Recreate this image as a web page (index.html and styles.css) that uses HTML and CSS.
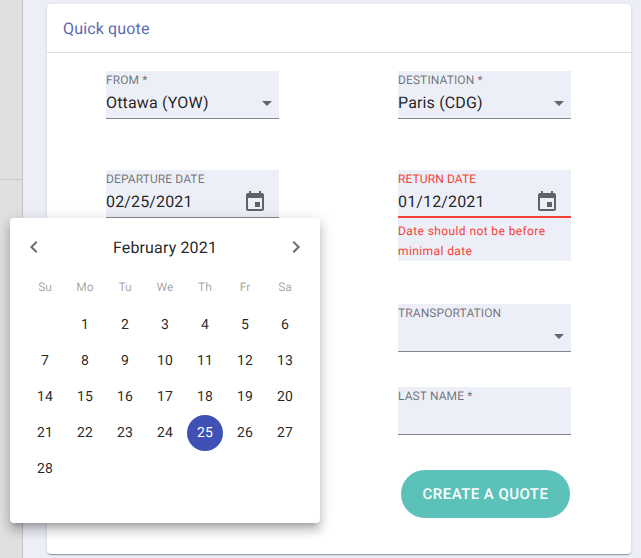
FILE: index.html
```html
<!DOCTYPE html>
<html lang="en">
<head>
<meta charset="utf-8">
<title>Quick quote</title>
<link rel="stylesheet" href="styles.css">
</head>
<body>
<div class="app">
  <aside class="sidebar"><div class="side-top"></div></aside>
  <main class="main">
    <section class="card">
      <h1 class="card-title">Quick quote</h1>
      <form class="form">
        <div class="column">
          <div class="field row1">
            <span class="label">FROM *</span>
            <div class="value"><span>Ottawa (YOW)</span><i class="caret"></i></div>
          </div>
          <div class="field row2">
            <span class="label">DEPARTURE DATE</span>
            <div class="value"><span>02/25/2021</span>
              <svg class="cal" viewBox="0 0 24 24"><path d="M17 12h-5v5h5v-5zM16 1v2H8V1H6v2H5c-1.11 0-1.99.9-1.99 2L3 19c0 1.1.89 2 2 2h14c1.1 0 2-.9 2-2V5c0-1.1-.9-2-2-2h-1V1h-2zm3 18H5V8h14v11z"/></svg>
            </div>
          </div>
        </div>
        <div class="column">
          <div class="field row1">
            <span class="label">DESTINATION *</span>
            <div class="value"><span>Paris (CDG)</span><i class="caret"></i></div>
          </div>
          <div class="field row2 error">
            <span class="label">RETURN DATE</span>
            <div class="value"><span>01/12/2021</span>
              <svg class="cal" viewBox="0 0 24 24"><path d="M17 12h-5v5h5v-5zM16 1v2H8V1H6v2H5c-1.11 0-1.99.9-1.99 2L3 19c0 1.1.89 2 2 2h14c1.1 0 2-.9 2-2V5c0-1.1-.9-2-2-2h-1V1h-2zm3 18H5V8h14v11z"/></svg>
            </div>
            <p class="helper">Date should not be before minimal date</p>
          </div>
          <div class="field row3">
            <span class="label">TRANSPORTATION</span>
            <div class="value"><span></span><i class="caret"></i></div>
          </div>
          <div class="field row4">
            <span class="label">LAST NAME *</span>
            <div class="value"></div>
          </div>
          <button class="submit" type="button">CREATE A QUOTE</button>
        </div>
      </form>
    </section>
  </main>
  <div class="picker">
    <div class="picker-head">
      <svg class="chev" viewBox="0 0 24 24"><path d="M15.41 7.41 14 6l-6 6 6 6 1.41-1.41L10.83 12z"/></svg>
      <span class="month">February 2021</span>
      <svg class="chev" viewBox="0 0 24 24"><path d="M10 6 8.59 7.41 13.17 12l-4.58 4.59L10 18l6-6z"/></svg>
    </div>
    <div class="weekdays">
      <span>Su</span><span>Mo</span><span>Tu</span><span>We</span><span>Th</span><span>Fr</span><span>Sa</span>
    </div>
    <div class="days">
      <span></span><span>1</span><span>2</span><span>3</span><span>4</span><span>5</span><span>6</span>
      <span>7</span><span>8</span><span>9</span><span>10</span><span>11</span><span>12</span><span>13</span>
      <span>14</span><span>15</span><span>16</span><span>17</span><span>18</span><span>19</span><span>20</span>
      <span>21</span><span>22</span><span>23</span><span>24</span><span class="selected">25</span><span>26</span><span>27</span>
      <span>28</span>
    </div>
  </div>
</div>
</body>
</html>
```
FILE: styles.css
```css
* { box-sizing: border-box; }
html, body { margin: 0; height: 100%; }
body {
  font-family: Roboto, "Liberation Sans", sans-serif;
  color: rgba(0, 0, 0, 0.87);
  overflow: hidden;
  text-rendering: geometricPrecision;
}
.app { display: flex; width: 641px; height: 558px; position: relative; background: #eceff8; }
.sidebar {
  width: 23px;
  flex: none;
  background: #e0e0e0;
  border-right: 1px solid #c4c4c4;
}
.side-top { height: 180px; border-bottom: 1px solid #c8c8c8; }
.main { flex: 1; padding: 4px 10px 4px 24px; }
.card {
  height: 550px;
  background: #fff;
  border-radius: 4px;
  box-shadow: 0 2px 1px -1px rgba(0,0,0,.2), 0 1px 1px 0 rgba(0,0,0,.14), 0 1px 3px 0 rgba(0,0,0,.12);
}
.card-title {
  margin: 0;
  height: 49px;
  padding: 15px 16px 0;
  font-size: 16px;
  line-height: 20px;
  font-weight: 400;
  letter-spacing: .15px;
  color: #5c6bb0;
  border-bottom: 1px solid #e0e0e0;
}
.form { display: flex; padding: 18px 60px 0 59px; justify-content: space-between; }
.column { width: 173px; display: flex; flex-direction: column; }
.field { background: #edeff8; display: flex; flex-direction: column; }
.label {
  height: 19px;
  padding-top: 2px;
  font-size: 12px;
  line-height: 14px;
  letter-spacing: .1px;
  color: rgba(0, 0, 0, 0.54);
}
.value {
  height: 29px;
  flex: none;
  display: flex;
  align-items: center;
  justify-content: space-between;
  padding: 0 0 3px 0;
  font-size: 16px;
  letter-spacing: .15px;
  border-bottom: 1px solid #86868c;
}
.row2 { margin-top: 51px; }
.row3 { margin-top: 43px; }
.row4 { margin-top: 35px; }
.caret {
  width: 0;
  height: 0;
  margin-right: 7px;
  margin-top: 1px;
  border-left: 5px solid transparent;
  border-right: 5px solid transparent;
  border-top: 5px solid #666;
}
.cal { width: 24px; height: 24px; fill: #5f6368; margin-right: 12px; margin-top: 1px; }
.error .label { color: #f44336; }
.error .value { border-bottom: 2px solid #f44336; padding-bottom: 2px; }
.helper {
  margin: 0;
  height: 43px;
  padding: 3px 0 0 0;
  font-size: 12px;
  line-height: 20px;
  letter-spacing: .4px;
  color: #f44336;
}
.error { height: 91px; }
.submit {
  margin: 35px 0 0 3px;
  padding: 0;
  width: 169px;
  height: 48px;
  border: 0;
  border-radius: 24px;
  background: #5cc1b9;
  color: #fff;
  font: 500 15px Roboto, "Liberation Sans", sans-serif;
  letter-spacing: .45px;
  text-rendering: geometricPrecision;
}
.picker {
  position: absolute;
  left: 10px;
  top: 218px;
  width: 310px;
  height: 305px;
  background: #fff;
  border-radius: 4px;
  padding: 0 15px;
  box-shadow: 0 5px 5px -3px rgba(0,0,0,.2), 0 8px 10px 1px rgba(0,0,0,.14), 0 3px 14px 2px rgba(0,0,0,.12);
}
.picker-head {
  display: flex;
  align-items: center;
  justify-content: space-between;
  height: 58px;
  margin: 0 -3px;
}
.chev { width: 24px; height: 24px; fill: #6b6b6b; }
.month { font-size: 16px; letter-spacing: .15px; }
.weekdays, .days { display: grid; grid-template-columns: repeat(7, 40px); }
.weekdays span {
  height: 22px;
  line-height: 22px;
  text-align: center;
  font-size: 12px;
  color: rgba(0, 0, 0, 0.38);
}
.weekdays { margin-bottom: 9px; }
.days { grid-auto-rows: 36px; }
.days span {
  width: 36px;
  height: 36px;
  margin: 0 2px;
  padding-bottom: 1px;
  display: flex;
  align-items: center;
  justify-content: center;
  font-size: 14px;
  letter-spacing: .2px;
}
.days .selected { background: #3f51b5; color: #fff; border-radius: 50%; }
```
